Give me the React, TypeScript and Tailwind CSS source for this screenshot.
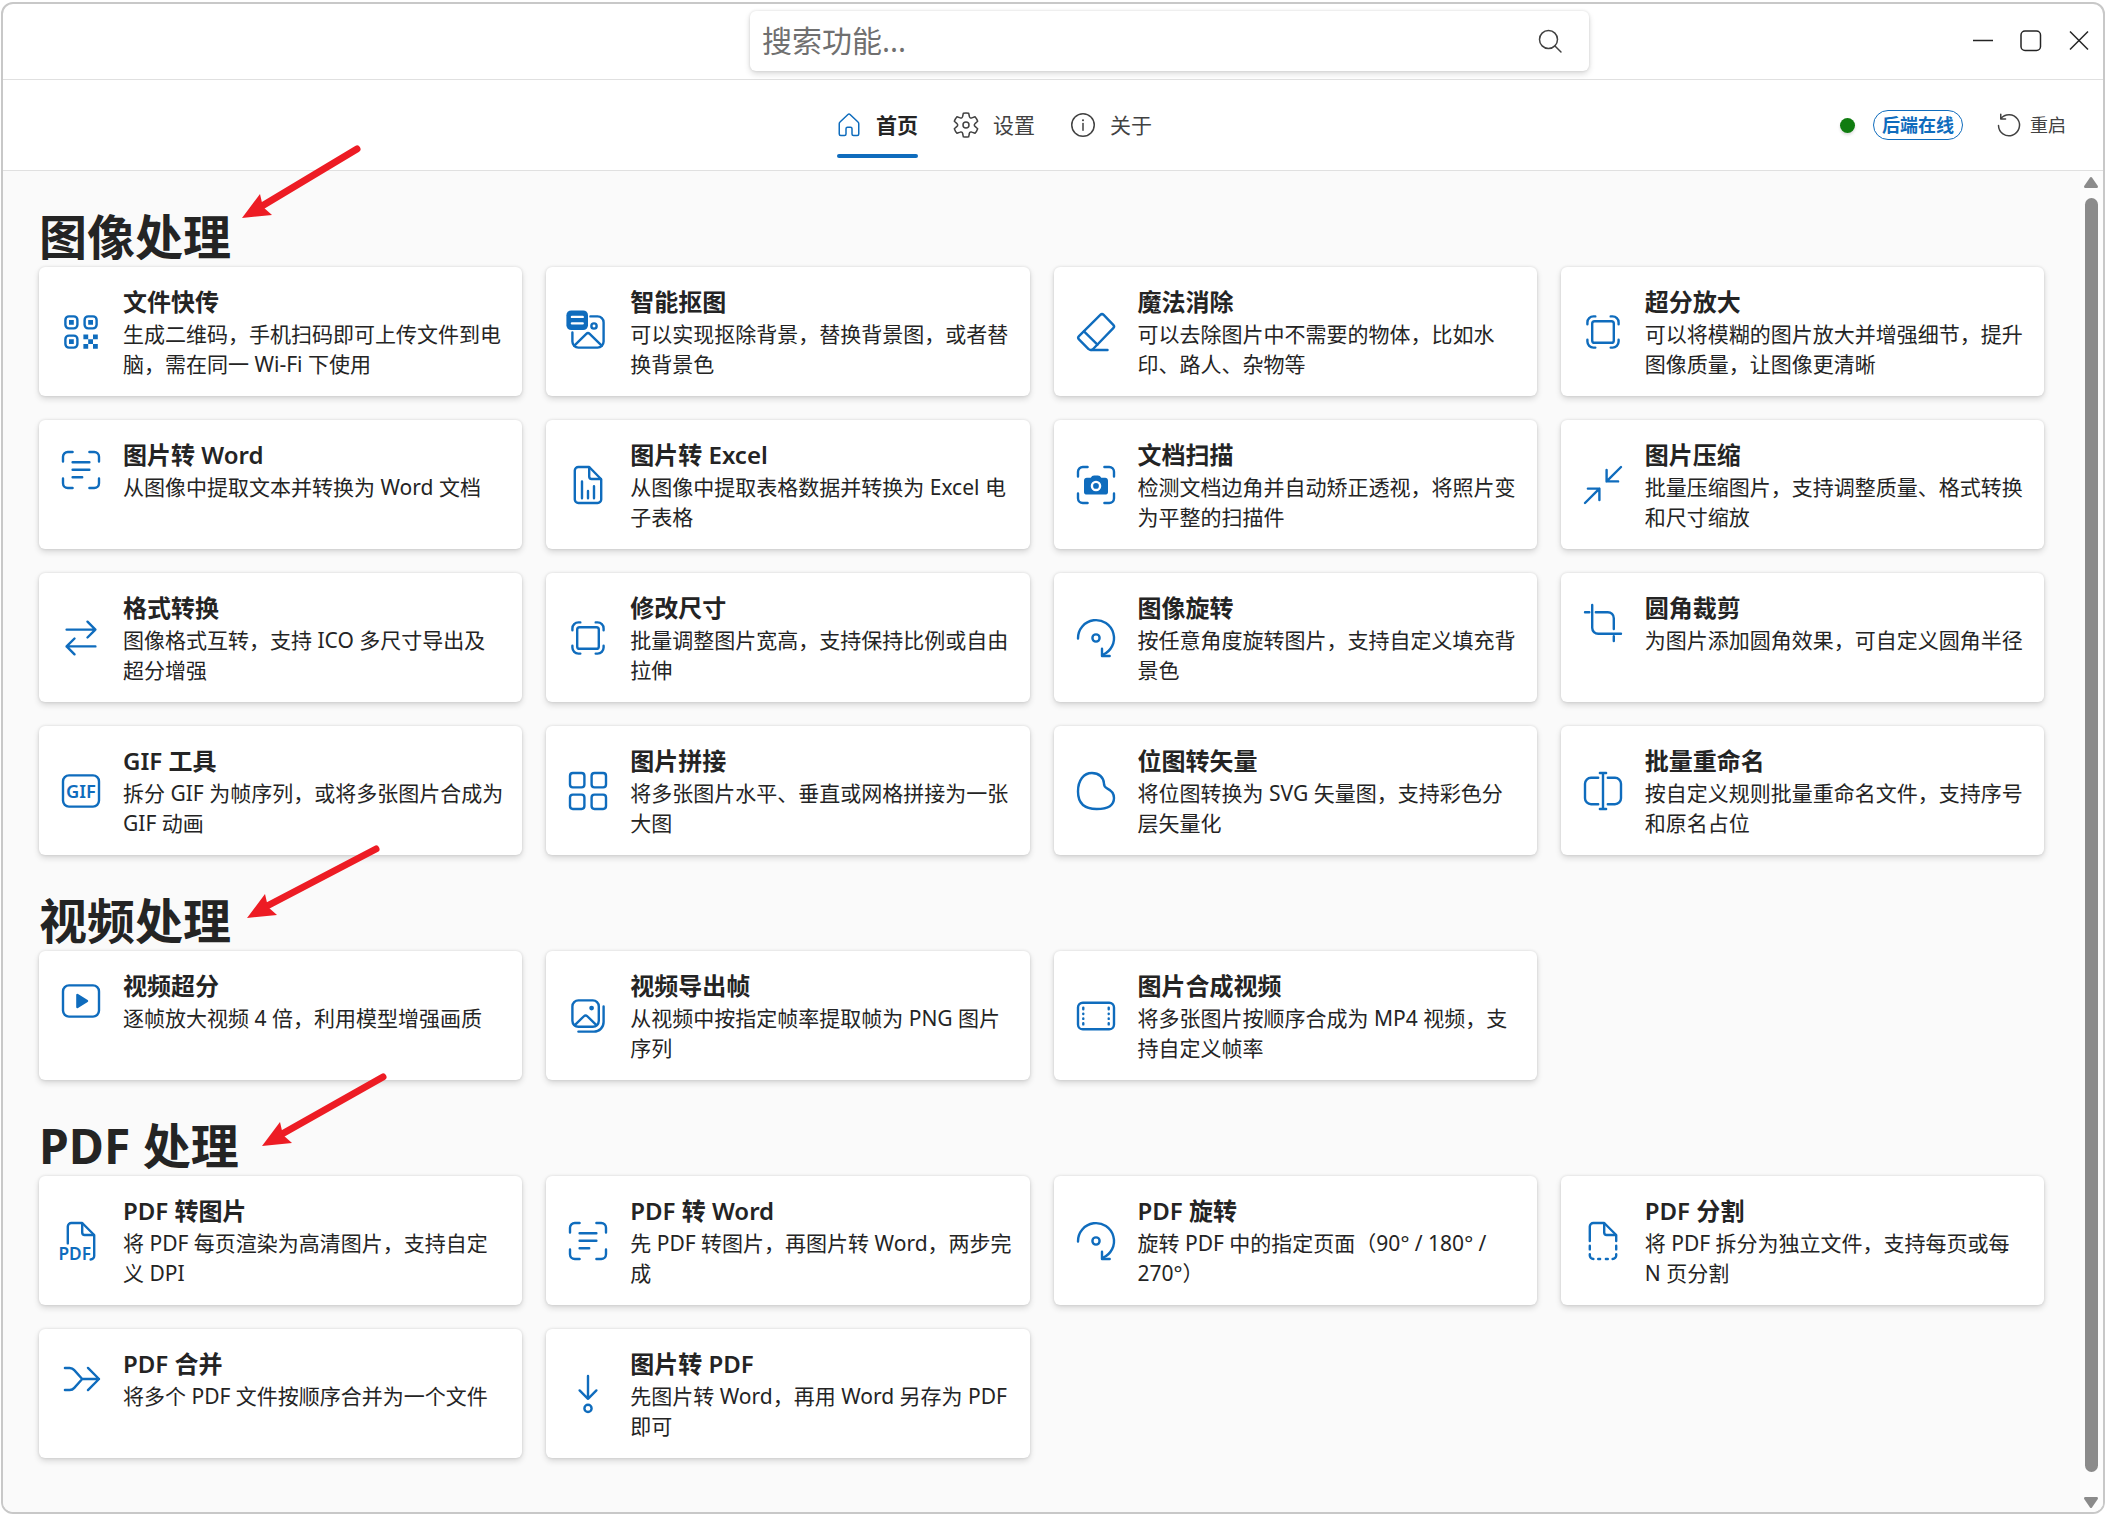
import type { ReactNode } from "react";

const icons: Record<string, ReactNode> = {
  qr: (
    <>
      <rect x="3.5" y="3.5" width="5" height="5" rx="1.5" />
      <rect x="11.5" y="3.5" width="5" height="5" rx="1.5" />
      <rect x="3.5" y="11.5" width="5" height="5" rx="1.5" />
      <path
        d="M5 5h2v2H5zM13 5h2v2h-2zM5 13h2v2H5zM11 11h2v2h-2zM15 11h2v2h-2zM13 13h2v2h-2zM11 15h2v2h-2zM15 15h2v2h-2z"
        fill="currentColor"
        stroke="none"
      />
    </>
  ),
  cutout: (
    <>
      <rect x="1" y="1" width="9" height="8.2" rx="2" fill="currentColor" stroke="none" />
      <path d="M3.3 3.7h4.5M3.3 6.4h4.5" stroke="white" />
      <path d="M11 3.5h3a2.5 2.5 0 0 1 2.5 2.5v8a2.5 2.5 0 0 1-2.5 2.5H6A2.5 2.5 0 0 1 3.5 14v-3.8" />
      <path d="m4.3 15.7 5-4.9a1 1 0 0 1 1.4 0l5 4.9" />
      <circle cx="12.5" cy="7.5" r="1.1" />
    </>
  ),
  eraser: (
    <>
      <path d="M11.8 2.9 2.9 11.7a1 1 0 0 0 0 1.4l4 4a1.3 1.3 0 0 0 1.9 0l8.4-8.7a1 1 0 0 0 0-1.4l-4-4.1a1 1 0 0 0-1.4 0Z" />
      <path d="m5 9.7 5.6 5.6M8 17.5h6.8" />
    </>
  ),
  resize: (
    <>
      <rect x="5.5" y="5.5" width="9" height="9" rx="1" />
      <path d="M3.5 6.8V6A2.5 2.5 0 0 1 6 3.5h.8M13.2 3.5h.8A2.5 2.5 0 0 1 16.5 6v.8M16.5 13.2v.8a2.5 2.5 0 0 1-2.5 2.5h-.8M6.8 16.5H6A2.5 2.5 0 0 1 3.5 14v-.8" />
    </>
  ),
  scanText: (
    <>
      <path d="M2.5 6.5v-2a2 2 0 0 1 2-2h2M13.5 2.5h2a2 2 0 0 1 2 2v2M17.5 13.5v2a2 2 0 0 1-2 2h-2M6.5 17.5h-2a2 2 0 0 1-2-2v-2" />
      <path d="M6.5 6.8h7M6.5 9.9h7M6.5 13h4" />
    </>
  ),
  chart: (
    <>
      <path d="M10.5 2.5H6A1.5 1.5 0 0 0 4.5 4v12A1.5 1.5 0 0 0 6 17.5h8a1.5 1.5 0 0 0 1.5-1.5V7.6Z" />
      <path d="M10.5 2.7v3.8a1 1 0 0 0 1 1h3.8M7.5 8.5v7M10 12.5v3M12.5 10.5v5" />
    </>
  ),
  scanCamera: (
    <>
      <path d="M2.5 6.5v-2a2 2 0 0 1 2-2h2M13.5 2.5h2a2 2 0 0 1 2 2v2M17.5 13.5v2a2 2 0 0 1-2 2h-2M6.5 17.5h-2a2 2 0 0 1-2-2v-2" />
      <path
        d="m7.8 7 .6-.7c.2-.2.5-.3.8-.3h1.6c.3 0 .6.1.8.3l.6.7h1.6c.7 0 1.2.5 1.2 1.2V13c0 .6-.5 1-1.2 1H6.200c-.7 0-1.200-.4-1.200-1V8.200C5 7.500 5.500 7 6.200 7Z"
        fill="currentColor"
        stroke="none"
      />
      <circle cx="10" cy="10.4" r="1.7" stroke="white" fill="currentColor" />
    </>
  ),
  compress: <path d="m17.5 2.5-6 6M11.5 3.7v4.8h4.8M2.5 17.5l6-6M3.7 11.5h4.8v4.8" />,
  swap: <path d="M4 6.500h12M12.700 3.200 16 6.500l-3.300 3.300M16 13.500H4M7.300 10.200 4 13.500l3.300 3.300" />,
  rotate: (
    <>
      <path d="M2.5 10.200a7.500 7.500 0 1 1 10.300 6.800" />
      <path d="M12.5 14.5v3h3.200" />
      <circle cx="10" cy="10" r="1.5" />
    </>
  ),
  crop: (
    <>
      <path d="M5.5 2.500V12A2.500 2.500 0 0 0 8 14.500h9.500M2.500 5.500h1.800" />
      <path d="M7 5.500h5A2.500 2.500 0 0 1 14.500 8v4.500M14.500 15.500v2" />
    </>
  ),
  gif: (
    <>
      <rect x="2.5" y="3.5" width="15" height="13" rx="2.5" />
      <text x="10" y="12.8" textAnchor="middle" fontSize="7.6" fontWeight="600" fill="currentColor" stroke="none">
        GIF
      </text>
    </>
  ),
  grid: (
    <>
      <rect x="2.5" y="2.5" width="6" height="6" rx="1.2" />
      <rect x="11.5" y="2.5" width="6" height="6" rx="1.2" />
      <rect x="2.5" y="11.5" width="6" height="6" rx="1.2" />
      <rect x="11.5" y="11.5" width="6" height="6" rx="1.2" />
    </>
  ),
  blob: (
    <path d="M8.300 2.500c3 0 4.900 1.900 5 4.300 0 1.200.4 1.700 1.300 2.100 1.900.9 2.900 2.300 2.900 4 0 2.900-2.200 4.600-7.200 4.600-5 0-7.800-2.400-7.800-7.300 0-4.700 2.400-7.700 5.800-7.700Z" />
  ),
  rename: (
    <>
      <path d="M8 4.500H5A2.500 2.500 0 0 0 2.500 7v6A2.500 2.500 0 0 0 5 15.500h3M12 4.500h3A2.500 2.500 0 0 1 17.500 7v6a2.500 2.500 0 0 1-2.500 2.500h-3" />
      <path d="M10 2.500v15M8.700 2.500h2.600M8.700 17.500h2.600" />
    </>
  ),
  video: (
    <>
      <rect x="2.5" y="3.5" width="15" height="13" rx="2.5" />
      <path d="M8.500 7.500v5l4-2.500Z" fill="currentColor" />
    </>
  ),
  images: (
    <>
      <rect x="3.5" y="3.5" width="11" height="11" rx="2.5" />
      <path d="m4.500 13.800 3.800-3.700a1 1 0 0 1 1.400 0l3.800 3.700M16.500 6v6.500a4 4 0 0 1-4 4H6" />
      <circle cx="11.500" cy="6.700" r="1" fill="currentColor" stroke="none" />
    </>
  ),
  film: (
    <>
      <rect x="2.5" y="4.5" width="15" height="11" rx="2" />
      <path d="M4.700 6.500v.7M4.700 9v.2M4.700 11v.2M4.700 13v.5M15.300 6.500v.7M15.300 9v.2M15.300 11v.2M15.300 13v.5" />
    </>
  ),
  pdf: (
    <>
      <path d="M4.500 11V4A1.500 1.500 0 0 1 6 2.500h4.500l5 5v8.700a1.500 1.500 0 0 1-1.500 1.500" />
      <path d="M10.500 2.700v3.800a1 1 0 0 0 1 1h3.800" />
      <text x="7.400" y="18" textAnchor="middle" fontSize="7.200" fontWeight="600" fill="currentColor" stroke="none">
        PDF
      </text>
    </>
  ),
  split: (
    <>
      <path d="M4.500 10V4A1.500 1.500 0 0 1 6 2.500h4.500l5 5V10" />
      <path d="M10.500 2.700v3.800a1 1 0 0 0 1 1h3.800M4.500 12v1.500M15.500 12v1.500M4.500 15.500v.5A1.500 1.500 0 0 0 6 17.500M15.500 15.500v.5a1.500 1.500 0 0 1-1.500 1.500M8 17.500h.8M11.200 17.500h.8" />
    </>
  ),
  merge: (
    <path d="M3.300 5.400h2a2.500 2.500 0 0 1 1.900.9l3.300 3.700h7M3.300 14.600h2a2.500 2.500 0 0 0 1.900-.9l3.300-3.700M12.900 5.400l4.600 4.600-4.600 4.600" />
  ),
  arrowDown: (
    <>
      <path d="M10 2.500v9.500M6.500 8.500 10 12l3.500-3.500" />
      <circle cx="10" cy="16" r="1.500" />
    </>
  ),
  home: (
    <path d="M9.300 3a1 1 0 0 1 1.400 0l5.300 5a1.500 1.500 0 0 1 .5 1.100v6.900a1 1 0 0 1-1 1H13a1 1 0 0 1-1-1v-3.500a1 1 0 0 0-1-1H9a1 1 0 0 0-1 1V16a1 1 0 0 1-1 1H4.500a1 1 0 0 1-1-1V9.100A1.500 1.500 0 0 1 4 8Z" />
  ),
  settings: (
    <g transform="translate(10 10) scale(1.18) translate(-10 -9.3)" strokeWidth=".85">
      <path d="M8.500 2.600a8 8 0 0 1 3 0l.4 1.900a1 1 0 0 0 1.400.8l1.800-.7a8 8 0 0 1 1.500 2.600l-1.500 1.300a1 1 0 0 0 0 1.600l1.500 1.300a8 8 0 0 1-1.500 2.600l-1.800-.7a1 1 0 0 0-1.400.8l-.4 1.900a8 8 0 0 1-3 0l-.4-1.900a1 1 0 0 0-1.400-.8l-1.800.7a8 8 0 0 1-1.500-2.600l1.500-1.300a1 1 0 0 0 0-1.600L3.400 7.200a8 8 0 0 1 1.500-2.600l1.800.7a1 1 0 0 0 1.400-.8Z" />
      <circle cx="10" cy="9.300" r="1.700" />
    </g>
  ),
  info: (
    <>
      <circle cx="10" cy="10" r="7.5" />
      <path d="M10 9v4.500" />
      <circle cx="10" cy="6.800" r=".7" fill="currentColor" stroke="none" />
    </>
  ),
  search: (
    <>
      <circle cx="9" cy="9" r="6" />
      <path d="m13.300 13.300 4 4" />
    </>
  ),
  restart: <path d="M4.500 5.800A7 7 0 1 1 3 10.300M4.500 2.800v3.200h3.200" />,
};

function Icon({ name, className }: { name: string; className: string }) {
  return (
    <svg
      viewBox="0 0 20 20"
      className={className}
      fill="none"
      stroke="currentColor"
      strokeLinecap="round"
      strokeLinejoin="round"
      aria-hidden="true"
    >
      {icons[name]}
    </svg>
  );
}

const sections = [
  {
    title: "图像处理",
    arrow: { className: "left-[203px] -top-[67px]", tail: 115 },
    tools: [
      { icon: "qr", name: "文件快传", text: "生成二维码，手机扫码即可上传文件到电脑，需在同一 Wi-Fi 下使用" },
      { icon: "cutout", name: "智能抠图", text: "可以实现抠除背景，替换背景图，或者替换背景色" },
      { icon: "eraser", name: "魔法消除", text: "可以去除图片中不需要的物体，比如水印、路人、杂物等" },
      { icon: "resize", name: "超分放大", text: "可以将模糊的图片放大并增强细节，提升图像质量，让图像更清晰" },
      { icon: "scanText", name: "图片转 Word", text: "从图像中提取文本并转换为 Word 文档" },
      { icon: "chart", name: "图片转 Excel", text: "从图像中提取表格数据并转换为 Excel 电子表格" },
      { icon: "scanCamera", name: "文档扫描", text: "检测文档边角并自动矫正透视，将照片变为平整的扫描件" },
      { icon: "compress", name: "图片压缩", text: "批量压缩图片，支持调整质量、格式转换和尺寸缩放" },
      { icon: "swap", name: "格式转换", text: "图像格式互转，支持 ICO 多尺寸导出及超分增强" },
      { icon: "resize", name: "修改尺寸", text: "批量调整图片宽高，支持保持比例或自由拉伸" },
      { icon: "rotate", name: "图像旋转", text: "按任意角度旋转图片，支持自定义填充背景色" },
      { icon: "crop", name: "圆角裁剪", text: "为图片添加圆角效果，可自定义圆角半径" },
      { icon: "gif", name: "GIF 工具", text: "拆分 GIF 为帧序列，或将多张图片合成为 GIF 动画" },
      { icon: "grid", name: "图片拼接", text: "将多张图片水平、垂直或网格拼接为一张大图" },
      { icon: "blob", name: "位图转矢量", text: "将位图转换为 SVG 矢量图，支持彩色分层矢量化" },
      { icon: "rename", name: "批量重命名", text: "按自定义规则批量重命名文件，支持序号和原名占位" },
    ],
  },
  {
    title: "视频处理",
    arrow: { className: "left-[208px] -top-[51px]", tail: 129 },
    tools: [
      { icon: "video", name: "视频超分", text: "逐帧放大视频 4 倍，利用模型增强画质" },
      { icon: "images", name: "视频导出帧", text: "从视频中按指定帧率提取帧为 PNG 图片序列" },
      { icon: "film", name: "图片合成视频", text: "将多张图片按顺序合成为 MP4 视频，支持自定义帧率" },
    ],
  },
  {
    title: "PDF 处理",
    arrow: { className: "left-[223px] -top-[48px]", tail: 121 },
    tools: [
      { icon: "pdf", name: "PDF 转图片", text: "将 PDF 每页渲染为高清图片，支持自定义 DPI" },
      { icon: "scanText", name: "PDF 转 Word", text: "先 PDF 转图片，再图片转 Word，两步完成" },
      { icon: "rotate", name: "PDF 旋转", text: "旋转 PDF 中的指定页面（90° / 180° / 270°）" },
      { icon: "split", name: "PDF 分割", text: "将 PDF 拆分为独立文件，支持每页或每 N 页分割" },
      { icon: "merge", name: "PDF 合并", text: "将多个 PDF 文件按顺序合并为一个文件" },
      { icon: "arrowDown", name: "图片转 PDF", text: "先图片转 Word，再用 Word 另存为 PDF 即可" },
    ],
  },
];

const tabs = [
  { icon: "home", label: "首页", active: true },
  { icon: "settings", label: "设置", active: false },
  { icon: "info", label: "关于", active: false },
];

function TitleBar() {
  return (
    <header className="grid h-[76px] grid-cols-[747fr_839fr_514fr] items-center border-b border-[#e0e0e0] pb-px">
      <div className="col-start-2 flex h-[60px] items-center rounded-md bg-white pl-3 pr-6 shadow-[0_0_3px_rgba(0,0,0,0.12),0_3px_6px_rgba(0,0,0,0.14)]">
        <input
          type="text"
          aria-label="搜索功能"
          placeholder="搜索功能..."
          className="min-w-0 flex-1 bg-transparent text-[30px] leading-10 outline-none placeholder:text-[#707070]"
        />
        <button type="button" aria-label="搜索" className="text-[#424242]">
          <Icon name="search" className="size-[30px]" />
        </button>
      </div>
      <div className="flex items-center justify-end">
        <button type="button" aria-label="最小化" className="flex h-12 w-12 items-center justify-center">
          <svg viewBox="0 0 24 24" className="size-6" stroke="currentColor" strokeWidth="1.5">
            <path d="M2 11.5h20" />
          </svg>
        </button>
        <button type="button" aria-label="最大化" className="flex h-12 w-12 items-center justify-center">
          <svg viewBox="0 0 24 24" className="size-6" fill="none" stroke="currentColor" strokeWidth="1.5">
            <rect x="2" y="2" width="19.500" height="19.500" rx="4" />
          </svg>
        </button>
        <button type="button" aria-label="关闭" className="flex h-12 w-12 items-center justify-center">
          <svg viewBox="0 0 24 24" className="size-6" stroke="currentColor" strokeWidth="1.5">
            <path d="m3 2.500 18 18M21 2.500l-18 18" />
          </svg>
        </button>
      </div>
    </header>
  );
}

function NavBar() {
  return (
    <div className="grid h-[91px] grid-cols-[831fr_318fr_951fr] items-center border-b border-[#e0e0e0]">
      <nav className="col-start-2 flex gap-[33px]">
        {tabs.map((tab) => (
          <a
            key={tab.label}
            href="#"
            className={
              tab.active
                ? "relative flex items-center gap-3 whitespace-nowrap text-[21px] font-bold leading-[30px]"
                : "flex items-center gap-3 whitespace-nowrap text-[21px] leading-[30px] text-[#424242]"
            }
          >
            <Icon name={tab.icon} className={tab.active ? "size-[30px] text-[#0f6cbd]" : "size-[30px]"} />
            {tab.label}
            {tab.active && <span className="absolute -bottom-[18px] left-[3px] right-0 h-1 rounded-full bg-[#0f6cbd]" />}
          </a>
        ))}
      </nav>
      <div className="flex items-center justify-end pr-[37px]">
        <span className="size-[15px] rounded-full bg-[#107c10] shadow-[0_2px_3px_rgba(0,0,0,0.14)]" />
        <span className="ml-[18px] flex h-[30px] items-center rounded-full border border-[#0f6cbd] px-2 text-lg font-bold text-[#0f6cbd]">
          后端在线
        </span>
        <button type="button" className="ml-[31px] flex items-center gap-[6px] text-lg text-[#424242]">
          <Icon name="restart" className="size-[30px]" />
          重启
        </button>
      </div>
    </div>
  );
}

function ToolCard({ icon, name, text }: { icon: string; name: string; text: string }) {
  return (
    <a
      href="#"
      className="block min-h-[129px] rounded-md bg-white pb-[17px] pl-[18px] pr-4 pt-[18px] shadow-[0_0_3px_rgba(0,0,0,0.12),0_3px_6px_rgba(0,0,0,0.14)]"
    >
      <div className="flex items-center gap-[18px]">
        <Icon name={icon} className="size-12 shrink-0 text-[#0f6cbd]" />
        <div className="min-w-0 flex-1">
          <h3 className="text-2xl font-semibold leading-[34px]">{name}</h3>
          <p className="text-[21px] leading-[30px]">{text}</p>
        </div>
      </div>
    </a>
  );
}

function PointerArrow({ className, tail }: { className: string; tail: number }) {
  return (
    <svg viewBox="0 0 140 80" className={`absolute h-[80px] w-[140px] ${className}`} aria-hidden="true">
      <path d={`M20 66 ${tail} 9`} stroke="#ed1c24" strokeWidth="7" strokeLinecap="round" />
      <path d="m0 78 18-24 3 13 9 8Z" fill="#ed1c24" />
    </svg>
  );
}

function Scrollbar() {
  return (
    <div className="flex w-[23px] shrink-0 flex-col items-center bg-[#fcfcfc] pb-[2px] pr-px pt-1" aria-hidden="true">
      <svg viewBox="0 0 16 14" className="h-[14px] w-4" fill="#8b8b8b">
        <path d="M7 2.500 1.200 11c-.4.900-.1 2 1 2h11.600c1.100 0 1.400-1.100 1-2L9 2.500c-.5-.7-1.500-.7-2 0Z" />
      </svg>
      <div className="mb-6 mt-[9px] w-[13px] flex-1 rounded-full bg-[#8b8b8b]" />
      <svg viewBox="0 0 16 14" className="h-[14px] w-4" fill="#8b8b8b">
        <path d="M7 11.500 1.200 3c-.4-.9-.1-2 1-2h11.600c1.100 0 1.400 1.100 1 2L9 11.500c-.5.700-1.500.700-2 0Z" />
      </svg>
    </div>
  );
}

export default function App() {
  return (
    <div className="flex min-h-screen bg-white pb-px pl-px pr-[2px] pt-[2px] font-['Noto_Sans','Noto_Sans_CJK_SC',sans-serif] text-[#242424]">
      <div className="flex flex-1 flex-col overflow-hidden rounded-xl border-2 border-[#c8c8c8] bg-white">
        <TitleBar />
        <NavBar />
        <div className="flex flex-1 bg-[#fafafa]">
          <main className="flex-1 px-9 pb-9">
            {sections.map((section) => (
              <section key={section.title} className="pt-9">
                <div className="relative">
                  <h2 className="text-5xl font-bold leading-[60px]">{section.title}</h2>
                  <PointerArrow {...section.arrow} />
                </div>
                <div className="grid grid-cols-4 gap-6">
                  {section.tools.map((tool) => (
                    <ToolCard key={tool.name} {...tool} />
                  ))}
                </div>
              </section>
            ))}
          </main>
          <Scrollbar />
        </div>
      </div>
    </div>
  );
}
